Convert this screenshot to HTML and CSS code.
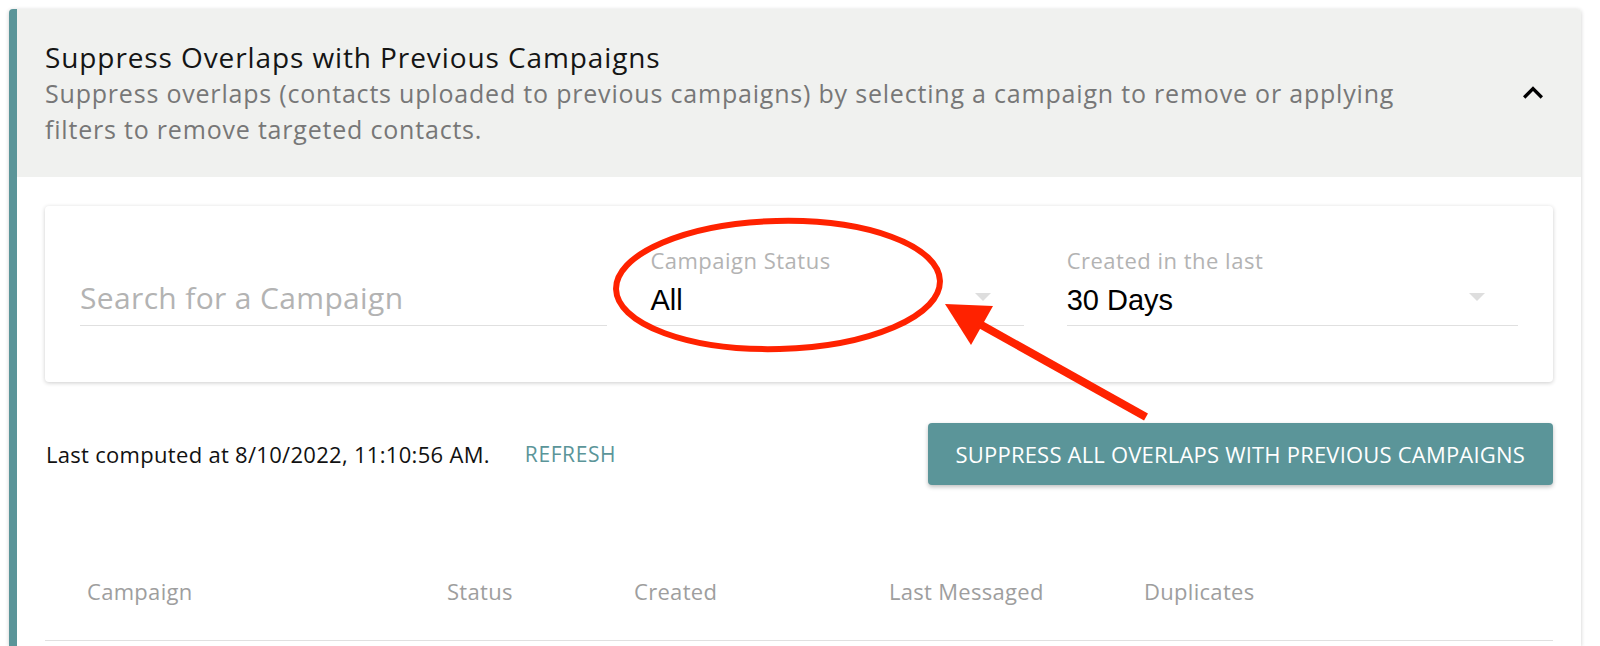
FILE: index.html
```html
<!DOCTYPE html>
<html lang="en">
<head>
<meta charset="utf-8">
<title>Suppress Overlaps</title>
<link rel="stylesheet" href="styles.css">
</head>
<body>
<section class="panel">
  <header class="panel-head">
    <div class="head-text">
      <h2 class="title">Suppress Overlaps with Previous Campaigns</h2>
      <p class="subtitle">Suppress overlaps (contacts uploaded to previous campaigns) by selecting a campaign to remove or applying filters to remove targeted contacts.</p>
    </div>
    <svg class="chev" viewBox="0 0 24 24" aria-hidden="true"><path d="M12 8l-6 6 1.41 1.41L12 10.83l4.59 4.58L18 14z"/></svg>
  </header>
  <div class="panel-body">
    <div class="filters">
      <div class="field">
        <div class="placeholder">Search for a Campaign</div>
      </div>
      <div class="field">
        <div class="label">Campaign Status</div>
        <div class="value-row"><span class="value">All</span><span class="caret"></span></div>
      </div>
      <div class="field">
        <div class="label">Created in the last</div>
        <div class="value-row"><span class="value">30 Days</span><span class="caret"></span></div>
      </div>
    </div>
    <div class="actions">
      <div class="computed">
        <span>Last computed at 8/10/2022, 11:10:56 AM.</span>
        <button class="refresh">REFRESH</button>
      </div>
      <button class="primary">SUPPRESS ALL OVERLAPS WITH PREVIOUS CAMPAIGNS</button>
    </div>
    <div class="thead">
      <span>Campaign</span>
      <span>Status</span>
      <span>Created</span>
      <span>Last Messaged</span>
      <span>Duplicates</span>
    </div>
  </div>
</section>
<svg class="annot" viewBox="0 0 1600 646" aria-hidden="true">
  <ellipse cx="778" cy="285" rx="162" ry="64" fill="none" stroke="#ff2200" stroke-width="6" transform="rotate(-1.5 778 285)"/>
  <line x1="1146" y1="417" x2="976" y2="322" stroke="#ff2200" stroke-width="8"/>
  <polygon points="945,304 993,306 971,345" fill="#ff2200"/>
</svg>
</body>
</html>
```
FILE: styles.css
```css
* { box-sizing: border-box; }

html, body {
  margin: 0;
  height: 646px;
  overflow: hidden;
  background: #ffffff;
}

body {
  position: relative;
  padding: 9px 19px 0 9px;
  font-family: "Open Sans", "DejaVu Sans", sans-serif;
  color: #111;
}

.panel {
  border-left: 8px solid #5b9599;
  border-radius: 4px 4px 0 0;
  background: #fff;
  box-shadow: 0 1px 4px rgba(0, 0, 0, 0.2);
  height: 637px;
}

.panel-head {
  height: 168px;
  background: #f0f1ef;
  padding: 0 28px 0 28px;
  display: flex;
  align-items: center;
  justify-content: space-between;
  border-radius: 0 4px 0 0;
}

.head-text {
  max-width: 1400px;
}

.title {
  margin: 0;
  font-weight: 400;
  font-size: 28px;
  letter-spacing: 0.9px;
  line-height: 36px;
  color: #151515;
}

.subtitle {
  margin: 0;
  font-size: 25px;
  letter-spacing: 0.8px;
  line-height: 36px;
  color: #777;
}

.chev {
  width: 40px;
  height: 40px;
  fill: #000;
  flex: none;
}

.panel-body {
  padding: 29px 28px 0 28px;
}

.filters {
  height: 176px;
  padding: 0 35px 56px;
  display: grid;
  grid-template-columns: 527fr 373fr 451fr;
  column-gap: 43px;
  align-content: end;
  align-items: end;
  border-radius: 4px;
  box-shadow: 0 1px 4px rgba(0, 0, 0, 0.2);
  background: #fff;
}

.field {
  border-bottom: 1px solid #e0e0e0;
  padding-bottom: 9px;
}

.placeholder {
  font-size: 30px;
  letter-spacing: 0.35px;
  line-height: 36px;
  color: #b3b3b3;
}

.label {
  font-size: 22px;
  letter-spacing: 0.5px;
  line-height: 24px;
  color: #b3b3b3;
  margin-bottom: 12px;
}

.value-row {
  height: 32px;
  display: flex;
  align-items: center;
  justify-content: space-between;
}

.value {
  font-family: "Liberation Sans", Arial, sans-serif;
  font-size: 29px;
  line-height: 32px;
  color: #000;
}

.caret {
  width: 0;
  height: 0;
  border-left: 8px solid transparent;
  border-right: 8px solid transparent;
  border-top: 8px solid #dedede;
  margin-right: 33px;
  margin-bottom: 6px;
}

.actions {
  margin-top: 41px;
  display: flex;
  align-items: center;
  justify-content: space-between;
}

.computed {
  display: flex;
  align-items: center;
  gap: 35px;
  padding-left: 1px;
  font-size: 22px;
  letter-spacing: 0.3px;
  color: #111;
}

.refresh {
  background: none;
  border: none;
  padding: 0;
  font-family: "Open Sans", "DejaVu Sans", sans-serif;
  font-size: 21px;
  letter-spacing: 0.6px;
  color: #5b9599;
}

.primary {
  height: 62px;
  padding: 0 28px;
  background: #5b9599;
  color: #fff;
  border: none;
  border-radius: 4px;
  font-family: "Open Sans", "DejaVu Sans", sans-serif;
  font-weight: 500;
  font-size: 22px;
  letter-spacing: 0.2px;
  box-shadow: 0 2px 4px rgba(0, 0, 0, 0.25);
}

.thead {
  margin-top: 56px;
  height: 100px;
  display: grid;
  grid-template-columns: 360px 187px 255px 255px 1fr;
  padding-left: 42px;
  align-items: center;
  border-bottom: 1px solid #e0e0e0;
  font-size: 22px;
  letter-spacing: 0.3px;
  color: #9e9e9e;
}

.annot {
  position: absolute;
  left: 0;
  top: 0;
  width: 1600px;
  height: 646px;
  pointer-events: none;
}
```
